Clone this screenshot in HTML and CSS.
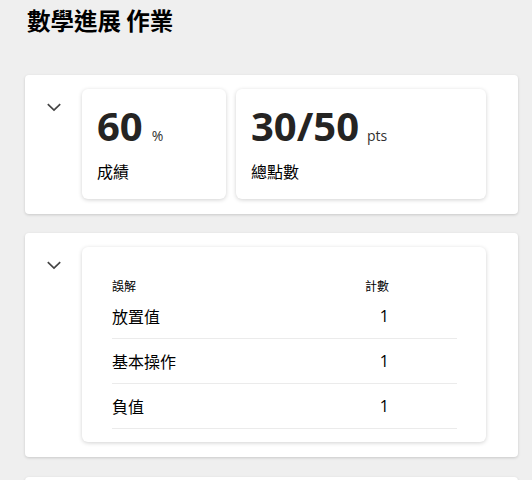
FILE: index.html
```html
<!DOCTYPE html>
<html lang="zh-Hant">
<head>
<meta charset="utf-8">
<title>數學進展 作業</title>
<link rel="stylesheet" href="styles.css">
</head>
<body>
<div class="page">
  <h1 class="title">數學進展 作業</h1>

  <section class="panel">
    <button class="toggle" aria-label="收合">
      <svg width="16" height="16" viewBox="0 0 16 16"><path d="M1.8 5.2 L8 11 L14.2 5.2" fill="none" stroke="#444" stroke-width="1.7"/></svg>
    </button>
    <div class="stats">
      <div class="stat stat-small">
        <div class="stat-value"><span class="num">60</span><span class="unit">%</span></div>
        <div class="stat-label">成績</div>
      </div>
      <div class="stat stat-wide">
        <div class="stat-value"><span class="num">30/50</span><span class="unit">pts</span></div>
        <div class="stat-label">總點數</div>
      </div>
    </div>
  </section>

  <section class="panel">
    <button class="toggle" aria-label="收合">
      <svg width="16" height="16" viewBox="0 0 16 16"><path d="M1.8 5.2 L8 11 L14.2 5.2" fill="none" stroke="#444" stroke-width="1.7"/></svg>
    </button>
    <div class="table-card">
      <div class="row head">
        <div class="cell-name">誤解</div>
        <div class="cell-count">計數</div>
      </div>
      <div class="row">
        <div class="cell-name">放置值</div>
        <div class="cell-count">1</div>
      </div>
      <div class="row">
        <div class="cell-name">基本操作</div>
        <div class="cell-count">1</div>
      </div>
      <div class="row">
        <div class="cell-name">負值</div>
        <div class="cell-count">1</div>
      </div>
    </div>
  </section>

  <section class="panel panel-tail"></section>
</div>
</body>
</html>
```

FILE: styles.css
```css
html, body {
  margin: 0;
  padding: 0;
  background: #efefef;
}
body {
  font-family: "Open Sans", "Noto Sans CJK TC", sans-serif;
  color: #000;
}
.page {
  padding: 5px 14px 0 25px;
}
.title {
  margin: 0 0 40px 2px;
  font-family: "Noto Sans CJK TC", sans-serif;
  font-size: 23.5px;
  line-height: 30px;
  font-weight: 700;
  color: #000;
}
.panel {
  display: flex;
  align-items: flex-start;
  background: #fff;
  border-radius: 4px;
  box-shadow: 0 1px 3px rgba(0,0,0,0.16);
  padding: 14px 32px 15px 9px;
  margin-bottom: 19px;
}
.toggle {
  flex: none;
  width: 40px;
  height: 36px;
  margin-right: 8px;
  padding: 0;
  border: 0;
  background: transparent;
  display: flex;
  align-items: center;
  justify-content: center;
}
.toggle svg { display: block; }
.stats {
  display: flex;
  gap: 10px;
}
.stat {
  background: #fff;
  border-radius: 6px;
  box-shadow: 0 1px 4px rgba(0,0,0,0.18);
  padding: 13px 15px 13px 15px;
  box-sizing: border-box;
  height: 110px;
}
.stat-small { width: 144px; }
.stat-wide { width: 250px; }
.stat-value {
  display: flex;
  align-items: baseline;
  height: 48px;
  line-height: 48px;
  white-space: nowrap;
}
.num {
  font-size: 40px;
  font-weight: 700;
  color: #252423;
}
.unit {
  margin-left: 9px;
  color: #323130;
}
.stat-small .unit { font-size: 14px; }
.stat-wide .unit { font-size: 14px; margin-left: 8px; }
.stat-label {
  margin-top: 9px;
  font-family: "Noto Sans CJK TC", sans-serif;
  font-size: 16px;
  line-height: 24px;
}
.table-card {
  flex: 1;
  background: #fff;
  border-radius: 6px;
  box-shadow: 0 1px 4px rgba(0,0,0,0.18);
  padding: 31px 29px 13px 30px;
}
.row {
  display: flex;
  align-items: center;
  height: 45px;
  box-sizing: border-box;
  border-bottom: 1px solid #ebebeb;
  font-family: "Noto Sans CJK TC", sans-serif;
  font-size: 16px;
}
.row.head {
  height: 16px;
  border-bottom: 0;
  font-size: 12px;
  line-height: 16px;
}
.cell-name { flex: 1; }
.cell-count {
  width: 92px;
  box-sizing: border-box;
  padding-right: 68px;
  text-align: right;
  font-family: "Open Sans", "Noto Sans CJK TC", sans-serif;
}
.row.head .cell-count {
  text-align: left;
  padding-left: 0;
  font-family: "Noto Sans CJK TC", sans-serif;
}
.panel-tail {
  height: 60px;
  margin-top: 20px;
}
```
